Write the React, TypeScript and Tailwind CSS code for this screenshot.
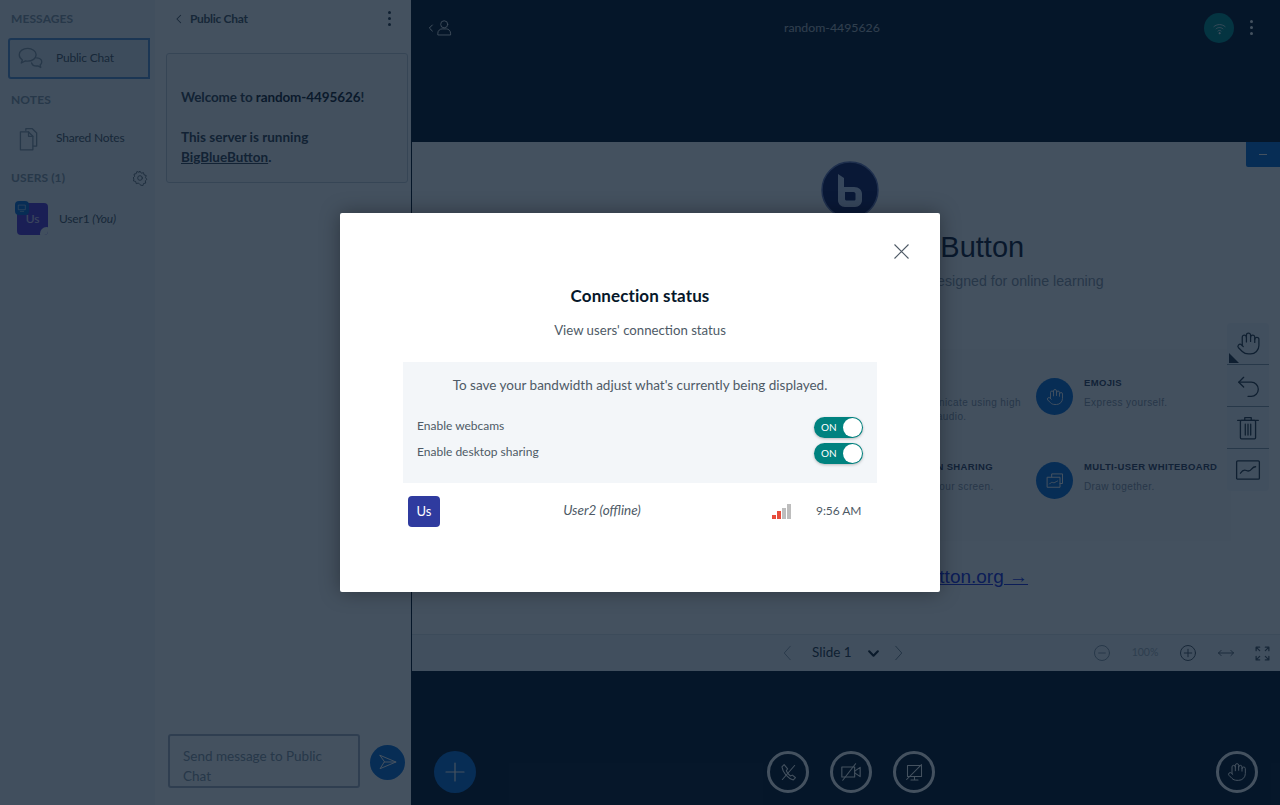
import { Hand } from "lucide-react";

const ui = "font-['Lato','Noto_Sans',sans-serif]";

function Kebab({ className }: { className: string }) {
  return (
    <div className={"flex flex-col gap-[3px] " + className}>
      <span className="w-[3px] h-[3px] rounded-full bg-current" />
      <span className="w-[3px] h-[3px] rounded-full bg-current" />
      <span className="w-[3px] h-[3px] rounded-full bg-current" />
    </div>
  );
}

function Icon({ size, children, className = "" }: { size: number; children: React.ReactNode; className?: string }) {
  return (
    <svg width={size} height={size} viewBox="0 0 24 24" fill="none" stroke="currentColor" strokeWidth="1.2" strokeLinecap="round" strokeLinejoin="round" className={className}>
      {children}
    </svg>
  );
}

function SectionLabel({ text }: { text: string }) {
  return <div className="text-[12px] font-bold text-[#8b9aa8] tracking-[0.1px]">{text}</div>;
}

function Sidebar() {
  return (
    <div className="w-[155px] h-full bg-[#f3f6f9] shrink-0 flex flex-col">
      <div className="pl-[11px] pt-[10px] h-[38px]"><SectionLabel text="MESSAGES" /></div>
      <div className="ml-[8px] w-[142px] h-[41px] border-2 border-[#5b94d4] rounded-l-[3px] bg-[#e4ebf2] flex items-center pl-[7px] text-[#4e5a66]">
        <Icon size={27} className="shrink-0 text-[#8b9aa8]">
          <path d="M9.5 3c-4 0-7.5 2.3-7.5 5.7 0 1.900 1.100 3.500 2.800 4.600L3.800 16l3.700-1.900c.7.100 1.300.200 2 .200 4 0 7.500-2.300 7.500-5.600S13.500 3 9.500 3z" />
          <path d="M17.500 11.500c2.500.200 4.500 1.500 4.500 3.500 0 1.100-.6 2-1.500 2.700l.6 2.300-2.600-1.400c-2.400.300-4.900-.6-5.500-2.600" />
        </Icon>
        <span className="ml-[12px] mt-[-2px] text-[12px] tracking-[-0.2px]">Public Chat</span>
      </div>
      <div className="pl-[11px] pt-[12px] h-[41px]"><SectionLabel text="NOTES" /></div>
      <div className="flex items-center pl-[15px] h-[38px] text-[#4e5a66]">
        <Icon size={26} className="shrink-0 text-[#8b9aa8]">
          <path d="M10 4V2.500h6l4 4V18.500h-3" />
          <path d="M5 5.500h7.500l4 4V22H5z" />
          <path d="M12.500 5.500v4h4" />
        </Icon>
        <span className="ml-[15px] mt-[-2px] text-[12px] tracking-[-0.2px]">Shared Notes</span>
      </div>
      <div className="pl-[11px] pr-[7px] mt-[10px] h-[20px] flex items-center justify-between">
        <SectionLabel text="USERS (1)" />
        <Icon size={16} className="text-[#4e5a66]">
          <circle cx="12" cy="12" r="3.500" />
          <path d="M12 2l2 2.800 3.300-.8.700 3.300 3.300.9-1 3.300 2 2.500-2.400 2.300.7 3.300-3.300.7-1 3.300-3.300-1L12 22l-2.300-2.500-3.300 1-.9-3.300-3.300-.8.800-3.300L1.500 12l2.400-2.400L3 6.300l3.300-.8L7.300 2.300l3 1z" />
        </Icon>
      </div>
      <div className="relative ml-[17px] mt-[15px] flex items-center">
        <div className="relative w-[31px] h-[32px] rounded-[4px] bg-[#5a3ad8] text-white/80 text-[12px] flex items-center justify-center overflow-hidden">
          Us
          <span className="absolute right-[-5px] bottom-[-5px] w-[13px] h-[13px] rounded-full bg-[#f3f6f9]" />
        </div>
        <div className="absolute left-[-2px] top-[-2px] w-[14px] h-[14px] rounded-[4px] bg-[#0f70d7] flex items-center justify-center text-white">
          <Icon size={10}><rect x="4" y="5" width="16" height="11" /><path d="M8 20h8" /></Icon>
        </div>
        <span className="ml-[11px] text-[12px] tracking-[-0.2px] text-[#4e5a66]">User1 <i>(You)</i></span>
      </div>
    </div>
  );
}

function ChatPanel() {
  return (
    <div className="w-[256px] h-full bg-white shrink-0 flex flex-col">
      <div className="h-[37px] flex items-center pl-[19px] pr-[20px] text-[#4e5a66]">
        <Icon size={10} className="shrink-0"><path d="M16 3l-9 9 9 9" strokeWidth="2.500" /></Icon>
        <span className="ml-[6px] text-[12px] tracking-[-0.3px] font-bold">Public Chat</span>
        <Kebab className="ml-auto text-[#2d3a47]" />
      </div>
      <div className="ml-[11px] mt-[16px] w-[242px] h-[130px] border border-[#c8d0d8] rounded-[3px] bg-[#f9fafb] pl-[14px] pt-[33px] text-[13.500px] leading-[20px] font-bold text-[#3a4653]">
        <div className="tracking-[-0.1px]">Welcome to <span className="text-[#1a2530]">random-4495626</span>!</div>
        <div className="mt-[20px]">This server is running</div>
        <div><u>BigBlueButton</u>.</div>
      </div>
      <div className="mt-auto mb-[17px] ml-[13px] flex items-center">
        <div className="w-[192px] h-[54px] border-2 border-[#aab4c4] rounded-[3px] pl-[13px] pt-[10px] pr-[20px] text-[13.500px] leading-[20px] text-[#8b9aa8]">
          Send message to Public Chat
        </div>
        <div className="ml-[10px] mt-[2px] w-[35px] h-[35px] rounded-full bg-[#0f70d7] flex items-center justify-center text-white">
          <Icon size={20}><path d="M2.500 4l19 8-19 8 5-8z" /><path d="M7.500 12h14" /></Icon>
        </div>
      </div>
    </div>
  );
}

function Feature({ title, lines, icon }: { title: string; lines: string[]; icon: React.ReactNode }) {
  return (
    <div className="flex items-start">
      <div className="w-[37px] h-[37px] rounded-full bg-[#0f70d7] text-white flex items-center justify-center shrink-0 mt-[1px]">{icon}</div>
      <div className="ml-[11px] font-['Liberation_Sans',sans-serif] text-[#8d96a5]">
        <div className="text-[9.500px] font-bold tracking-[0.35px] leading-[12px] text-[#3a4560] whitespace-nowrap">{title}</div>
        <div className="mt-[7px] text-[10px] tracking-[0.4px] leading-[14px] whitespace-nowrap">
          {lines.map((l) => <div key={l}>{l}</div>)}
        </div>
      </div>
    </div>
  );
}

function SlideTools() {
  const cell = "h-[42px] flex items-center justify-center text-[#2d3a47] relative";
  return (
    <div className="absolute right-[11px] top-[181px] w-[42px] rounded-[4px] bg-[#f3f6f9] flex flex-col divide-y divide-[#8b9aa8]">
      <div className={cell}>
        <Hand size={25} strokeWidth={1.200} />
        <span className="absolute left-[2px] bottom-[1px] w-0 h-0 border-l-[10px] border-l-[#2d3a47] border-t-[10px] border-t-transparent" />
      </div>
      <div className={cell}>
        <Icon size={26}><path d="M8 4L3.500 8.500 8 13" /><path d="M3.500 8.500H15a6.500 6.500 0 0 1 0 13h-3" /></Icon>
      </div>
      <div className={cell}>
        <Icon size={26}><path d="M2.500 5h19" /><path d="M9 5V2.500h6V5" /><rect x="5" y="5" width="14" height="17" rx="1" /><path d="M9.500 8.500v10M12 8.500v10M14.500 8.500v10" /></Icon>
      </div>
      <div className={cell}>
        <Icon size={26}><rect x="1.500" y="3.500" width="21" height="17" rx="1" /><path d="M5 15c2-3 3.500-3.500 5.500-2.500s3.500.5 5-1.500 2.500-2 3.500-2" /></Icon>
      </div>
    </div>
  );
}

function Slide() {
  return (
    <div className="relative flex-1 bg-white flex flex-col items-center pl-[8px] overflow-hidden font-['Liberation_Sans',sans-serif]">
      <div className="absolute right-0 top-0 w-[34px] h-[25px] rounded-bl-[2px] bg-[#0f70d7] flex items-center justify-center">
        <span className="w-[8px] h-px bg-white" />
      </div>
      <svg width="58" height="58" viewBox="0 0 58 58" className="mt-[19px] shrink-0">
        <circle cx="29" cy="29" r="28" fill="#141c5c" stroke="#6a78b8" strokeWidth="1.500" />
        <path d="M17 13l6 4v9h10c5 0 8 3 8 7v6c0 4-3 7-7 7H24c-4 0-7-3-7-7z M24 31v7c0 1 1 1.500 2 1.500h7c1 0 1.500-.5 1.500-1.500v-5c0-1-.5-2-2-2z" fill="#c8d4f0" fillRule="evenodd" />
      </svg>
      <div className="mt-[12px] pr-[2px] text-[29px] leading-[32px] text-[#141c34] whitespace-nowrap">Welcome To BigBlueButton</div>
      <div className="mt-[8px] text-[14.200px] leading-[20px] text-[#8d96a5] whitespace-nowrap">BigBlueButton is an open source conference system designed for online learning</div>
      <div className="mt-[58px] w-[762px] h-[192px] bg-[#fafbfc] shrink-0 pt-[28px] pl-[21px] grid grid-cols-[182px_182px_182px_1fr] grid-rows-[84px_84px]">
        <div />
        <div />
        <Feature title="VIDEO" lines={["Communicate using high", "quality audio."]} icon={<Hand size={18} />} />
        <Feature title="EMOJIS" lines={["Express yourself."]} icon={<Hand size={18} strokeWidth={1.200} />} />
        <div />
        <div />
        <Feature title="SCREEN SHARING" lines={["Share your screen."]} icon={<Hand size={18} />} />
        <Feature
          title="MULTI-USER WHITEBOARD"
          lines={["Draw together."]}
          icon={<Icon size={20}><path d="M8 7V3.500h13V15h-3" /><rect x="3" y="7.500" width="15" height="12" /><path d="M5.500 15.500c2-2.500 3-2 4.500-1.500s2.500-1 5-2" /></Icon>}
        />
      </div>
      <a className="mt-[24px] pl-[16px] text-[19px] leading-[24px] text-[#2233e0] underline whitespace-nowrap">Learn more at www.bigbluebutton.org →</a>
      <SlideTools />
    </div>
  );
}

function SlideControls() {
  return (
    <div className="h-[37px] bg-[#f3f6f9] border-t border-[#dfe5ea] shrink-0 flex items-center text-[#4e5a66]">
      <Icon size={18} className="ml-[367px] text-[#8b9aa8]"><path d="M15 3L7 12l8 9" /></Icon>
      <span className={"ml-[15px] mt-[-2px] text-[13.500px] text-[#2d3a47] " + ui}>Slide 1</span>
      <Icon size={13} className="ml-[15px] text-[#1a2530]"><path d="M4 8l8 8 8-8" strokeWidth="4" /></Icon>
      <Icon size={18} className="ml-[9px] text-[#6a7a88]"><path d="M9 3l8 9-8 9" /></Icon>
      <Icon size={20} className="ml-[185px] text-[#8b9aa8]"><circle cx="12" cy="12" r="9" /><path d="M8 12h8" /></Icon>
      <span className={"ml-[20px] w-[28px] text-[10.500px] text-[#a7b3bd] " + ui}>100%</span>
      <Icon size={20} className="ml-[18px]"><circle cx="12" cy="12" r="9" /><path d="M7.500 12h9M12 7.500v9" /></Icon>
      <Icon size={18} className="ml-[19px]"><path d="M2 12h20M5.500 8.500L2 12l3.500 3.500M18.500 8.500L22 12l-3.500 3.500" /></Icon>
      <Icon size={17} className="ml-[19px]"><path d="M3 8V3h5M21 8V3h-5M3 16v5h5M21 16v5h-5M3 3l5 5M21 3l-5 5M3 21l5-5M21 21l-5-5" strokeWidth="1.800" /></Icon>
    </div>
  );
}

function RoundButton({ children, className = "" }: { children: React.ReactNode; className?: string }) {
  return (
    <div className={"w-[42px] h-[42px] rounded-full border-[3px] border-white text-white flex items-center justify-center " + className}>
      {children}
    </div>
  );
}

function Main() {
  return (
    <div className="flex-1 h-full bg-[#06172a] flex flex-col pl-px min-w-0">
      <div className="h-[142px] shrink-0 flex items-start text-white">
        <div className="mt-[19px] ml-[15px] flex items-center">
          <Icon size={8}><path d="M16 3l-9 9 9 9" strokeWidth="3" /></Icon>
          <Icon size={17}><circle cx="13" cy="7.500" r="5" /><path d="M4 22v-2c0-3.500 3-6 6-6h6c3 0 6 2.500 6 6v2z" /></Icon>
        </div>
        <span className={"absolute left-[784px] top-[19px] text-[12.300px] text-white/70 " + ui}>random-4495626</span>
        <div className="ml-auto mt-[13px] w-[30px] h-[30px] rounded-full bg-[#008a88] flex items-center justify-center">
          <Icon size={15}><path d="M3 9c5-4.500 13-4.500 18 0M6.500 12.500c3-2.800 8-2.800 11 0M9.500 16c1.500-1.300 3.500-1.300 5 0" /><circle cx="12" cy="19.500" r="1" fill="currentColor" /></Icon>
        </div>
        <Kebab className="mt-[20px] ml-[16px] mr-[27px] text-white" />
      </div>
      <Slide />
      <SlideControls />
      <div className="h-[134px] shrink-0 flex items-start pt-[80px] pl-[22px] pr-[22px]">
        <div className="w-[42px] h-[42px] rounded-full bg-[#0f70d7] text-white flex items-center justify-center">
          <Icon size={24}><path d="M12 3v18M3 12h18" /></Icon>
        </div>
        <RoundButton className="ml-[291px]">
          <Icon size={21}><path d="M5 20L19 4" /><path d="M7 3L4.500 5.500c1 6.500 6.500 13 13 15l2.500-2.500-3.500-3-2.300 1c-2-1.200-3.700-3.500-4.700-6l1.500-2.200z" /></Icon>
        </RoundButton>
        <RoundButton className="ml-[21px]">
          <Icon size={22}><rect x="2" y="6.500" width="14" height="11" /><path d="M16 11l6-4v10l-6-4" /><path d="M3 21L17 3" /></Icon>
        </RoundButton>
        <RoundButton className="ml-[21px]">
          <Icon size={21}><rect x="4" y="4" width="16" height="12.500" /><path d="M8 20.500h8M12 16.500v4" /><path d="M3 20L20 3" /></Icon>
        </RoundButton>
        <RoundButton className="ml-auto">
          <Hand size={20} strokeWidth={1.200} />
        </RoundButton>
      </div>
    </div>
  );
}

function Toggle() {
  return (
    <div className="relative w-[49px] h-[21px] rounded-full bg-[#00827f] text-white text-[10px] flex items-center pl-[7px] shadow-[0_1px_3px_rgba(0,0,0,0.25)]">
      ON
      <span className="absolute right-px top-px w-[19px] h-[19px] rounded-full bg-white" />
    </div>
  );
}

function SignalBars() {
  const bars = [
    { h: "h-[4px]", c: "bg-[#e74c3c]" },
    { h: "h-[8px]", c: "bg-[#e74c3c]" },
    { h: "h-[11px]", c: "bg-[#bdbdbd]" },
    { h: "h-[15px]", c: "bg-[#bdbdbd]" },
  ];
  return (
    <div className="flex items-end gap-px h-[15px] ml-[8px]">
      {bars.map((b, i) => <span key={i} className={"w-[4px] " + b.h + " " + b.c} />)}
    </div>
  );
}

function ConnectionModal() {
  return (
    <div className="absolute inset-0 bg-[rgba(6,23,42,0.75)]">
      <div className="absolute left-[340px] top-[213px] w-[600px] h-[379px] bg-white rounded-[2px] shadow-[0_0_20px_rgba(0,0,0,0.35)] flex flex-col items-center">
        <svg width="15" height="15" viewBox="0 0 15 15" className="absolute right-[31px] top-[31px] text-[#4e5a66]" stroke="currentColor" strokeWidth="1.100">
          <path d="M.5.500l14 14M14.500.500l-14 14" />
        </svg>
        <h2 className="mt-[73px] text-[17px] tracking-[0.1px] leading-[20px] font-bold text-[#06172a]">Connection status</h2>
        <p className="mt-[14px] text-[13.200px] leading-[20px] text-[#4e5a66]">View users' connection status</p>
        <div className="mt-[22px] w-[474px] h-[121px] bg-[#f3f6f9] flex flex-col">
          <p className="mt-[13px] text-center text-[13.500px] leading-[20px] text-[#4e5a66]">To save your bandwidth adjust what's currently being displayed.</p>
          <div className="mt-[22px] pl-[14px] pr-[14px] flex items-center justify-between h-[21px] text-[12px] text-[#4e5a66]">
            <span className="mt-[-3px]">Enable webcams</span>
            <Toggle />
          </div>
          <div className="mt-[5px] pl-[14px] pr-[14px] flex items-center justify-between h-[21px] text-[12px] text-[#4e5a66]">
            <span className="mt-[-4px]">Enable desktop sharing</span>
            <Toggle />
          </div>
        </div>
        <div className="mt-[13px] w-[474px] flex items-center pl-[5px] text-[#4e5a66] text-[13.500px]">
          <div className="w-[32px] h-[31px] rounded-[4px] bg-[#2f3b9f] text-white text-[13px] flex items-center justify-center">Us</div>
          <i className="w-[324px] mt-[-2px] text-center">User2 (offline)</i>
          <SignalBars />
          <span className="ml-[25px] mt-[-2px] text-[12px] tracking-[-0.05px]">9:56 AM</span>
        </div>
      </div>
    </div>
  );
}

export default function App() {
  return (
    <div className={"relative w-[1280px] h-[805px] overflow-hidden flex " + ui}>
      <Sidebar />
      <ChatPanel />
      <Main />
      <ConnectionModal />
    </div>
  );
}
